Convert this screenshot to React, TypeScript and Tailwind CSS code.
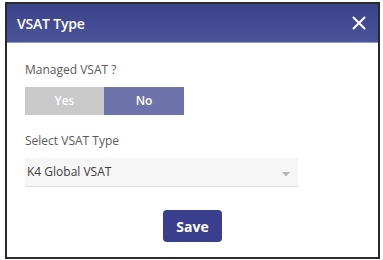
import React, { useState } from "react";

const font = { fontFamily: '"Open Sans", "Liberation Sans", sans-serif' };

export default function App() {
  const [managed, setManaged] = useState(false);

  return (
    <div className="w-[383px] h-[260px] bg-white pt-[2px] pl-[5px]" style={font}>
      <div className="w-[375px] h-[257px] border-2 border-[#2a2a2a] flex flex-col bg-white">
        <div className="h-[39px] bg-gradient-to-b from-[#3a438a] to-[#4b5499] flex items-center justify-between pl-[10px] pr-[12px] border-b border-[#8f95c4]">
          <span className="text-white text-[14px] font-semibold tracking-[-0.2px]">VSAT Type</span>
          <svg width="14" height="14" viewBox="0 0 14 14" className="text-white">
            <path d="M1.5 1.5 L12.5 12.5 M12.5 1.5 L1.5 12.5" stroke="currentColor" strokeWidth="2" strokeLinecap="round" />
          </svg>
        </div>
        <div className="flex flex-col pl-[18px] pt-[21px]">
          <span className="text-[12px] text-[#5a5a5a] leading-none">Managed VSAT ?</span>
          <div className="flex mt-[11px] h-[28px] w-[159px] text-[12px] font-semibold text-white">
            <button
              onClick={() => setManaged(true)}
              className={`w-[79px] flex items-center justify-center ${managed ? "bg-[#6e73ab]" : "bg-[#c9c9c9]"}`}
            >
              Yes
            </button>
            <button
              onClick={() => setManaged(false)}
              className={`w-[80px] flex items-center justify-center ${managed ? "bg-[#c9c9c9]" : "bg-[#6e73ab]"}`}
            >
              No
            </button>
          </div>
          <span className="text-[12px] text-[#5a5a5a] leading-none mt-[20px]">Select VSAT Type</span>
          <div className="mt-[11px] w-[273px] h-[29px] bg-[#f6f6f6] border-b border-[#dedede] flex items-center justify-between pl-[2px] pr-[8px]">
            <span className="text-[12px] text-[#3f3f3f]">K4 Global VSAT</span>
            <svg width="8" height="5" viewBox="0 0 8 5" className="mt-[4px]">
              <path d="M0 0 H8 L4 4.5 Z" fill="#b5b5b5" />
            </svg>
          </div>
        </div>
        <div className="flex justify-center mt-[23px]">
          <button className="w-[59px] h-[32px] rounded-[4px] bg-[#393f8c] text-white text-[14px] font-bold">
            Save
          </button>
        </div>
      </div>
    </div>
  );
}
